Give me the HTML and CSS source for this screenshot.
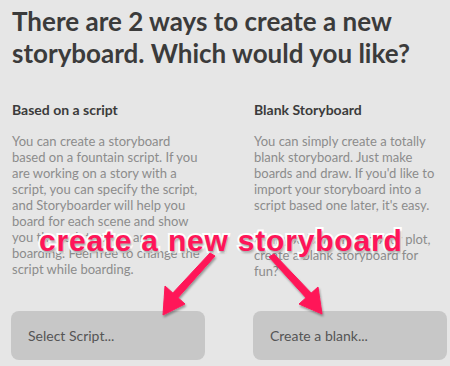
FILE: index.html
```html
<!DOCTYPE html>
<html lang="en">
<head>
  <meta charset="UTF-8">
  <title>New Storyboard</title>
  <link rel="stylesheet" href="styles.css">
</head>
<body>
  <div class="welcome">
    <h1>There are 2 ways to create a new storyboard. Which would you like?</h1>

    <div class="choices">
      <!-- Script based -->
      <div class="choice">
        <h2>Based on a script</h2>
        <p>You can create a storyboard based on a fountain script. If you are working on a story with a script, you can specify the script, and Storyboarder will help you board for each scene and show you the script as you are boarding. Feel free to change the script while boarding.</p>
        <button class="choice-btn">Select Script...</button>
      </div>

      <!-- Blank -->
      <div class="choice">
        <h2>Blank Storyboard</h2>
        <p>You can simply create a totally blank storyboard. Just make boards and draw. If you'd like to import your storyboard into a script based one later, it's easy.</p>
        <p class="extra">Or if you have no script or plot, create a blank storyboard for fun?</p>
        <button class="choice-btn">Create a blank...</button>
      </div>
    </div>

    <!-- Annotation -->
    <div class="callout">create a new storyboard</div>
    <svg class="arrows" width="450" height="366" viewBox="0 0 450 366">
      <defs>
        <filter id="drop" x="-20%" y="-20%" width="140%" height="140%">
          <feDropShadow dx="1" dy="2" stdDeviation="1.2" flood-color="#000" flood-opacity="0.35"/>
        </filter>
      </defs>
      <g fill="#ff1559" stroke="#ff1559" filter="url(#drop)">
        <polygon points="210,253 215,256 176,300 170,296" stroke-width="1"/>
        <polygon points="163,315 165,286 185,304" stroke-width="1"/>
        <polygon points="269,257 274,254 314,296 308,300" stroke-width="1"/>
        <polygon points="322,314 318,287 299,304" stroke-width="1"/>
      </g>
    </svg>
  </div>
</body>
</html>
```

FILE: styles.css
```css
/* General */
body {
  margin: 0;
  background: #e6e6e6;
  font-family: 'Lato', 'Open Sans', sans-serif;
  overflow: hidden;
}

.welcome {
  position: relative;
  width: 450px;
  height: 366px;
  box-sizing: border-box;
  padding: 5px 3px 0 12px;
}

h1 {
  margin: 0;
  font-size: 26px;
  line-height: 32px;
  font-weight: 700;
  color: #3b3b3b;
  width: 430px;
}

/* Choice columns */
.choices {
  display: grid;
  grid-template-columns: 194px 194px;
  column-gap: 48px;
  margin-top: 32px;
  margin-left: -1px;
}

.choice {
  display: flex;
  flex-direction: column;
  height: 259px;
}

.choice h2 {
  margin: 0 0 0 1px;
  font-size: 14px;
  line-height: 18px;
  font-weight: 700;
  color: #3b3b3b;
}

.choice p {
  margin: 14px 0 0 1px;
  font-size: 13px;
  line-height: 16px;
  font-weight: 400;
  color: #8c8c8c;
}

.choice p.extra {
  margin-top: 18px;
  padding-right: 14px;
}

.choice-btn {
  margin-top: auto;
  height: 49px;
  border: none;
  border-radius: 8px;
  background: #c7c7c7;
  color: #555;
  font-family: inherit;
  font-size: 14px;
  text-align: left;
  padding: 0 17px;
}

/* Annotation overlay */
.callout {
  position: absolute;
  left: 39px;
  top: 223px;
  font-family: 'Liberation Sans', Arial, sans-serif;
  font-size: 30px;
  font-weight: 700;
  letter-spacing: 0.8px;
  line-height: 36px;
  color: #ff1559;
  -webkit-text-stroke: 4px #fff;
  paint-order: stroke fill;
  text-shadow: 1px 2px 2px rgba(0, 0, 0, 0.35);
  white-space: nowrap;
}

.arrows {
  position: absolute;
  left: 0;
  top: 0;
}
```
